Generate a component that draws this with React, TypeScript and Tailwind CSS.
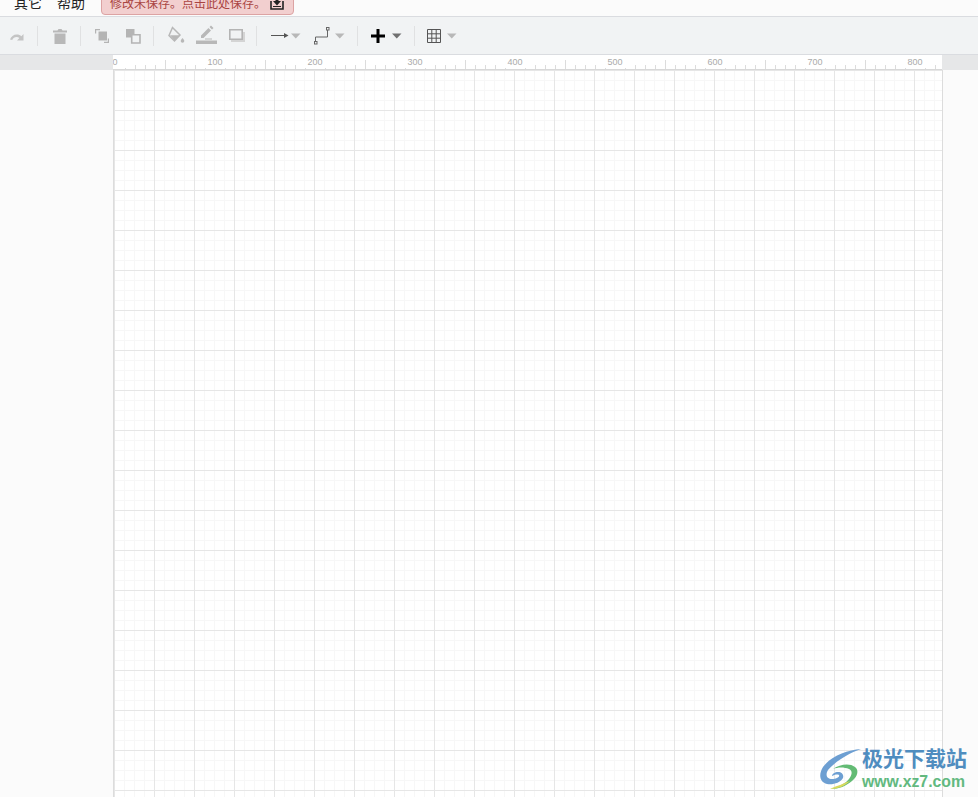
import React from "react";

const gray = "#b8b8b8";

const Separator = ({ className }: { className: string }) => (
  <div className={`h-[20px] w-px shrink-0 bg-[#e0e1e2] ${className}`} />
);

const Caret = ({ className, color = gray }: { className: string; color?: string }) => (
  <svg width="10" height="6" viewBox="0 0 10 6" className={`shrink-0 ${className}`}>
    <path d="M0 .5h9.500L4.750 5.500z" fill={color} />
  </svg>
);

const Icon: React.FC<{ size?: number; className: string; children: React.ReactNode }> = ({
  size = 24,
  className,
  children,
}) => (
  <svg width={size} height={size} viewBox={`0 0 ${size} ${size}`} className={`shrink-0 ${className}`}>
    {children}
  </svg>
);

const Toolbar = () => (
  <div className="flex h-[38px] items-center border-b border-[#dadce0] bg-[#f1f3f4]">
    <Icon size={16} className="ml-[9px]">
      <path
        d="M1 11.500C2 8.500 4.500 6.500 7.800 6.500c1.900 0 3.400.6 4.600 1.700L14.500 6v6.500H8l2.400-2.400c-.8-.8-1.700-1.200-2.800-1.200-2 0-3.600 1.100-4.400 3z"
        fill="#c4c4c4"
      />
    </Icon>
    <Separator className="ml-[12px]" />
    <Icon size={16} className="ml-[14px]">
      <path d="M1 2.500h4.500l1-1.500h3l1 1.500H15v2H1zM2.500 5.500h11V16h-11z" fill={gray} />
    </Icon>
    <Separator className="ml-[12px]" />
    <Icon size={16} className="ml-[13px]">
      <path d="M1 5.500V1h5v1.200H2.200v3.300zM15 10.500V15h-5v-1.200h3.800v-3.300z" fill="#b4b4b4" />
      <path d="M4.500 3.500h8.500v9H4.500z" fill="#b4b4b4" />
    </Icon>
    <Icon size={16} className="ml-[15px]">
      <path d="M1 1h8.500v8.500H1z" fill="#b4b4b4" />
      <path d="M6.700 6.700h8.300V15H6.700z" fill="#f1f3f4" stroke="#b4b4b4" strokeWidth="1.600" />
    </Icon>
    <Separator className="ml-[12px]" />
    <Icon size={20} className="ml-[14px]">
      <path d="M4.500 1.500 12 9l-5.500 6L1 9.500z" fill="#f1f3f4" stroke="#b8b8b8" strokeWidth="1.500" />
      <path d="M2 9.300h9.500l-5 5.300z" fill={gray} />
      <path d="M14.500 12c1.200 1.300 1.800 2.200 1.800 3a1.800 1.800 0 0 1-3.600 0c0-.8.6-1.700 1.800-3z" fill={gray} />
    </Icon>
    <Icon size={22} className="ml-[8px]">
      <path d="M0 15.500h21V19H0z" fill={gray} />
      <path d="M5 13v-2.500l7.500-7.500 2.500 2.500L7.500 13zM13.500 2l1.500-1.500 2.500 2.500L16 4.500z" fill={gray} />
      <path d="M9 13.500h7v1H9z" fill={gray} />
    </Icon>
    <Icon size={18} className="ml-[10px]">
      <path d="M3 5h14v10H3z" fill="#d4d4d4" />
      <path d="M1.800 2.800h12.400v9.400H1.800z" fill="#f1f3f4" stroke="#b4b4b4" strokeWidth="1.600" />
    </Icon>
    <Separator className="ml-[10px]" />
    <Icon size={18} className="ml-[14px]">
      <path d="M0 8.500h14" stroke="#555" strokeWidth="1" />
      <path d="M13 6l4.500 2.500L13 11z" fill="#555" />
    </Icon>
    <Caret className="ml-[2px]" />
    <Icon size={18} className="ml-[13px]">
      <path d="M1.500 15v-5h12V3" fill="none" stroke="#666" strokeWidth="1" />
      <rect x="0.500" y="14.500" width="2.500" height="2.500" fill="#f1f3f4" stroke="#666" />
      <rect x="12.500" y="0.500" width="2.500" height="2.500" fill="#f1f3f4" stroke="#666" />
    </Icon>
    <Caret className="ml-[3px]" />
    <Separator className="ml-[12px]" />
    <Icon size={14} className="ml-[13px]">
      <path d="M5.500 0h3v5.500H14v3H8.500V14h-3V8.500H0v-3h5.500z" fill="#000" />
    </Icon>
    <Caret className="ml-[7px]" color="#707070" />
    <Separator className="ml-[12px]" />
    <Icon size={14} className="ml-[12px]">
      <path
        d="M.5.500h13v13H.5zM4.800.500v13M9.200.500v13M.5 4.800h13M.5 9.200h13"
        fill="none"
        stroke="#555"
        strokeWidth="1"
      />
    </Icon>
    <Caret className="ml-[6px]" />
  </div>
);

const Ruler = () => (
  <div className="flex h-[15px] bg-[#e6e7e8]">
    <div className="relative ml-[113px] h-[15px] w-[829px] overflow-hidden border-b border-[#d8d8d8] bg-white">
      <svg width="829" height="14" className="absolute left-0 top-0">
        {Array.from({ length: 83 }).map((_, i) =>
          i % 10 === 0 ? null : (
            <line
              key={i}
              x1={i * 10 + 2.5}
              x2={i * 10 + 2.5}
              y1={i % 5 === 0 ? 5 : 10}
              y2={14}
              stroke="#dcdcdc"
            />
          ),
        )}
      </svg>
      <div className="relative flex pt-px">
        {["0", "100", "200", "300", "400", "500", "600", "700", "800"].map((label) => (
          <div key={label} className="w-[100px] shrink-0">
            <span className="-ml-[10px] block w-[24px] bg-white text-center text-[9px] leading-[12px] text-[#aaaaaa]">
              {label}
            </span>
          </div>
        ))}
      </div>
    </div>
  </div>
);

const Watermark = () => (
  <div className="absolute bottom-[7px] left-[819px] flex items-start">
    <svg width="44" height="42" viewBox="0 0 44 42" className="mt-[1px] shrink-0">
      <path
        d="M42 1C28 2 12 8 4 19-1 27 1 34 8 36c6 1 13-1 16-6 1-3-1-6-5-6-3 0-6 2-6 4 2-1 5-2 7-1 1 2-3 4-7 4-5 0-7-4-4-9C16 14 28 6 42 1z"
        fill="#6d9fd2"
      />
      <path
        d="M14 21c7-5 17-6 22-2 4 3 3 9-3 14-6 5-13 8-21 8 7-2 14-5 18-10 3-4 4-8 0-10-5-2-11-2-16 0z"
        fill="#63bb74"
      />
      <path d="M11 41c8 0 15-3 20-8-4 1-9 4-13 5-3 1-5 2-7 3z" fill="#d9d95c" />
    </svg>
    <div className="-mt-[2px] -ml-[1px] flex flex-col">
      <span className="font-['Noto_Sans_CJK_SC',sans-serif] text-[21px] font-bold leading-[24px] text-[#4f8dbf]">
        极光下载站
      </span>
      <span className="mt-[5px] font-['Liberation_Sans',sans-serif] text-[15.800px] font-bold leading-[15px] text-[#62b97f]">
        www.xz7.com
      </span>
    </div>
  </div>
);

export default function App() {
  return (
    <div className="relative flex h-[797px] w-[978px] flex-col overflow-hidden bg-[#fbfbfb] font-['Liberation_Sans','Noto_Sans_CJK_SC',sans-serif]">
      <div className="flex h-[17px] shrink-0 items-end overflow-hidden border-b border-[#dadce0] bg-[#fbfbfb]">
        <div className="mb-[1px] ml-[14px] flex h-[24px] items-center gap-[15px] text-[14px] leading-[24px] text-[#222]">
          <span>其它</span>
          <span>帮助</span>
        </div>
        <div className="mb-[1px] ml-[16px] flex h-[24px] w-[193px] items-center rounded-b-[4px] border border-[#dca3a3] bg-[#f2cfcf] pl-[8px] text-[12px] text-[#a94442]">
          <span className="font-['Noto_Sans_CJK_SC',sans-serif]">修改未保存。点击此处保存。</span>
          <svg width="14" height="14" viewBox="0 0 14 14" className="ml-[4px] shrink-0">
            <path d="M1 5v8h12V5" fill="none" stroke="#222" strokeWidth="1.600" />
            <path d="M5.500 0h3v5H11L7 9.500 3 5h2.500z" fill="#222" />
            <path d="M3 10.500h8" stroke="#222" />
          </svg>
        </div>
      </div>
      <Toolbar />
      <Ruler />
      <div className="flex min-h-0 flex-1">
        <div className="ml-[113px] w-[830px] border-x border-[#dcdcdc] bg-white bg-[linear-gradient(#e6e6e6_1px,transparent_1px),linear-gradient(90deg,#e6e6e6_1px,transparent_1px),linear-gradient(#f7f7f7_1px,transparent_1px),linear-gradient(90deg,#f7f7f7_1px,transparent_1px)] bg-[size:40px_40px,40px_40px,10px_10px,10px_10px]" />
      </div>
      <Watermark />
    </div>
  );
}
